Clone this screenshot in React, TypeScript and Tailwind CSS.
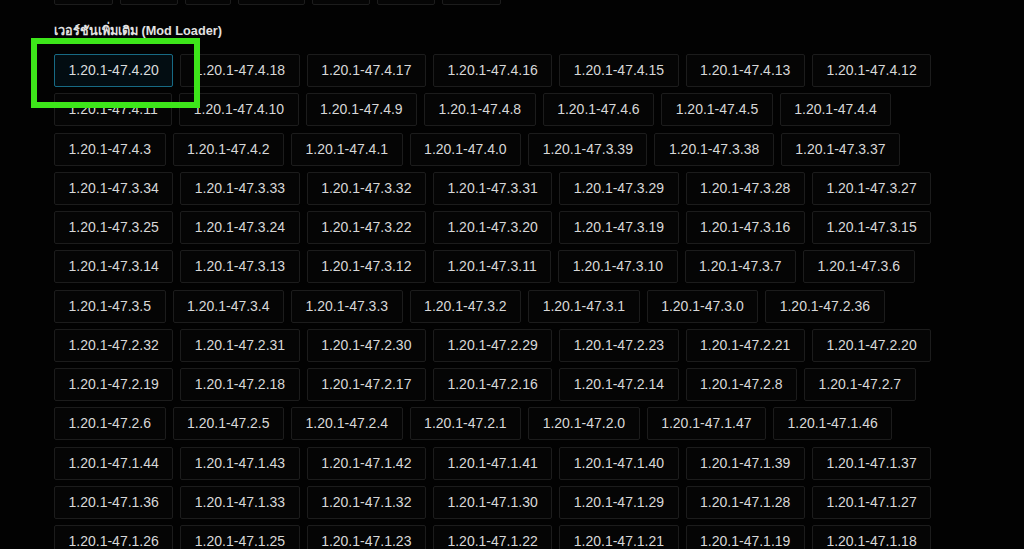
const topWidths = [59, 58, 46, 67, 58, 58, 59]

const versions = [
  '47.4.20', '47.4.18', '47.4.17', '47.4.16', '47.4.15', '47.4.13', '47.4.12',
  '47.4.11', '47.4.10', '47.4.9', '47.4.8', '47.4.6', '47.4.5', '47.4.4',
  '47.4.3', '47.4.2', '47.4.1', '47.4.0', '47.3.39', '47.3.38', '47.3.37',
  '47.3.34', '47.3.33', '47.3.32', '47.3.31', '47.3.29', '47.3.28', '47.3.27',
  '47.3.25', '47.3.24', '47.3.22', '47.3.20', '47.3.19', '47.3.16', '47.3.15',
  '47.3.14', '47.3.13', '47.3.12', '47.3.11', '47.3.10', '47.3.7', '47.3.6',
  '47.3.5', '47.3.4', '47.3.3', '47.3.2', '47.3.1', '47.3.0', '47.2.36',
  '47.2.32', '47.2.31', '47.2.30', '47.2.29', '47.2.23', '47.2.21', '47.2.20',
  '47.2.19', '47.2.18', '47.2.17', '47.2.16', '47.2.14', '47.2.8', '47.2.7',
  '47.2.6', '47.2.5', '47.2.4', '47.2.1', '47.2.0', '47.1.47', '47.1.46',
  '47.1.44', '47.1.43', '47.1.42', '47.1.41', '47.1.40', '47.1.39', '47.1.37',
  '47.1.36', '47.1.33', '47.1.32', '47.1.30', '47.1.29', '47.1.28', '47.1.27',
  '47.1.26', '47.1.25', '47.1.23', '47.1.22', '47.1.21', '47.1.19', '47.1.18',
]

export default function App() {
  return (
    <div className="relative h-[549px] w-[1024px] overflow-hidden bg-[#020202] font-['Liberation_Sans','Noto_Sans','DejaVu_Sans',sans-serif]">
      <div className="pl-[54px]">
        {/* previous section, cut off at the top */}
        <div className="-mt-[28px] flex gap-[7px]">
          {topWidths.map((w, i) => (
            <div
              key={i}
              className="h-[33px] rounded-[2px] border border-[#1c1c1c] bg-[#050505]"
              style={{ width: w }}
            />
          ))}
        </div>

        <h3 className="mt-[18px] mb-[15px] text-[12.7px] leading-[16px] font-bold text-[#e2e2e2]">
          เวอร์ชันเพิ่มเติม (Mod Loader)
        </h3>

        <div className="flex w-[940px] flex-wrap gap-x-[7px] gap-y-[6.25px]">
          {versions.map((v, i) => (
            <button
              key={v}
              className={
                i === 0
                  ? 'h-[33px] rounded-[2px] border border-[#176a84] bg-[#030d12] px-[13.5px] text-[14px] whitespace-nowrap text-[#dadcdd]'
                  : 'h-[33px] rounded-[2px] border border-[#1c1c1c] bg-[#050505] px-[13.5px] text-[14px] whitespace-nowrap text-[#d8d8d8]'
              }
            >
              1.20.1-{v}
            </button>
          ))}
        </div>
      </div>

      {/* annotation highlight */}
      <div className="pointer-events-none absolute top-[38px] left-[31px] h-[70px] w-[169px] border-[6px] border-[#3de61a]" />
    </div>
  )
}
